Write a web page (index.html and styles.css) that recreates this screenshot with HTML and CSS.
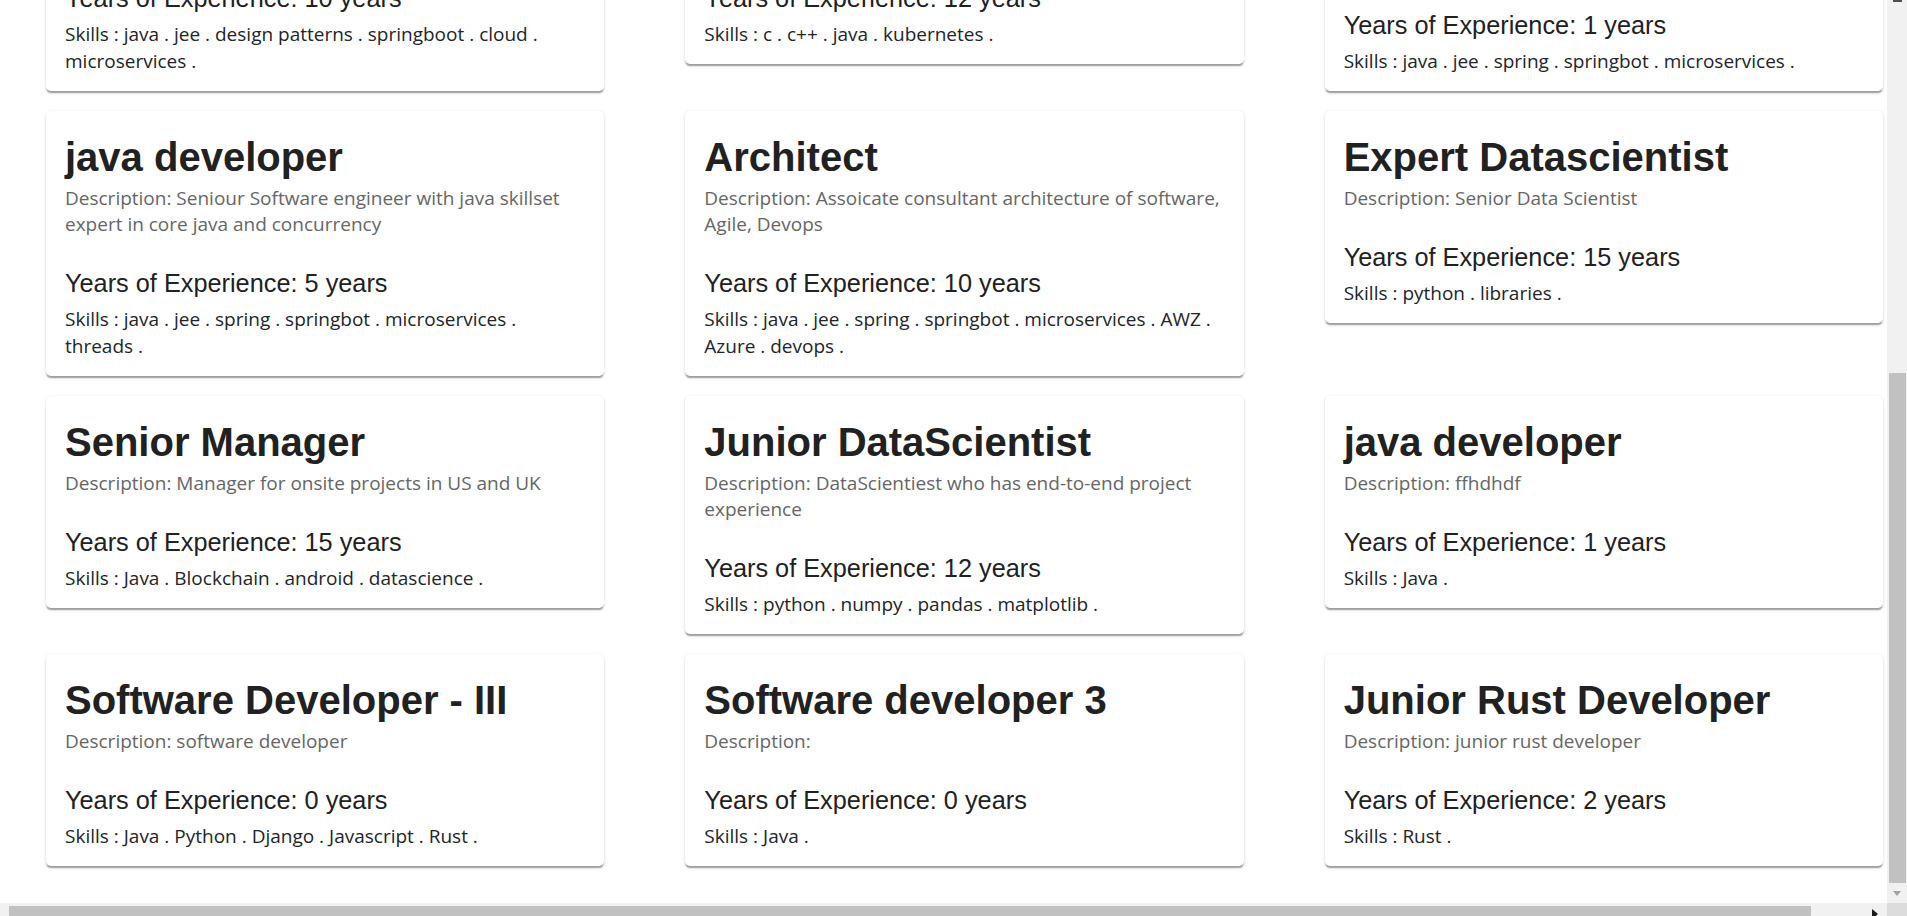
FILE: index.html
```html
<!DOCTYPE html>
<html lang="en">
<head>
<meta charset="utf-8">
<title>Jobs</title>
<link rel="stylesheet" href="styles.css">
</head>
<body>
<div class="window">
  <div class="main">
    <div class="viewport">
      <div class="scroller">
        <div class="grid">
          <div class="card">
            <h2 class="title">java developer</h2>
            <p class="desc">Description: java developer</p>
            <h3 class="years">Years of Experience: 10 years</h3>
            <p class="skills">Skills : <span class="skill">java .</span> <span class="skill">jee .</span> <span class="skill">design patterns .</span> <span class="skill">springboot .</span> <span class="skill">cloud .</span> <span class="skill">microservices .</span></p>
          </div>
          <div class="card">
            <h2 class="title">Software Developer</h2>
            <p class="desc">Description: software developer</p>
            <h3 class="years">Years of Experience: 12 years</h3>
            <p class="skills">Skills : <span class="skill">c .</span> <span class="skill">c++ .</span> <span class="skill">java .</span> <span class="skill">kubernetes .</span></p>
          </div>
          <div class="card">
            <h2 class="title">java developer</h2>
            <p class="desc">Description: java developer with experience in spring, springboot and microservices based applications</p>
            <h3 class="years">Years of Experience: 1 years</h3>
            <p class="skills">Skills : <span class="skill">java .</span> <span class="skill">jee .</span> <span class="skill">spring .</span> <span class="skill">springbot .</span> <span class="skill">microservices .</span></p>
          </div>

          <div class="card">
            <h2 class="title">java developer</h2>
            <p class="desc">Description: Seniour Software engineer with java skillset expert in core java and concurrency</p>
            <h3 class="years">Years of Experience: 5 years</h3>
            <p class="skills">Skills : <span class="skill">java .</span> <span class="skill">jee .</span> <span class="skill">spring .</span> <span class="skill">springbot .</span> <span class="skill">microservices .</span> <span class="skill">threads .</span></p>
          </div>
          <div class="card">
            <h2 class="title">Architect</h2>
            <p class="desc">Description: Assoicate consultant architecture of software, Agile, Devops</p>
            <h3 class="years">Years of Experience: 10 years</h3>
            <p class="skills">Skills : <span class="skill">java .</span> <span class="skill">jee .</span> <span class="skill">spring .</span> <span class="skill">springbot .</span> <span class="skill">microservices .</span> <span class="skill">AWZ .</span> <span class="skill">Azure .</span> <span class="skill">devops .</span></p>
          </div>
          <div class="card">
            <h2 class="title">Expert Datascientist</h2>
            <p class="desc">Description: Senior Data Scientist</p>
            <h3 class="years">Years of Experience: 15 years</h3>
            <p class="skills">Skills : <span class="skill">python .</span> <span class="skill">libraries .</span></p>
          </div>

          <div class="card">
            <h2 class="title">Senior Manager</h2>
            <p class="desc">Description: Manager for onsite projects in US and UK</p>
            <h3 class="years">Years of Experience: 15 years</h3>
            <p class="skills">Skills : <span class="skill">Java .</span> <span class="skill">Blockchain .</span> <span class="skill">android .</span> <span class="skill">datascience .</span></p>
          </div>
          <div class="card">
            <h2 class="title">Junior DataScientist</h2>
            <p class="desc">Description: DataScientiest who has end-to-end project experience</p>
            <h3 class="years">Years of Experience: 12 years</h3>
            <p class="skills">Skills : <span class="skill">python .</span> <span class="skill">numpy .</span> <span class="skill">pandas .</span> <span class="skill">matplotlib .</span></p>
          </div>
          <div class="card">
            <h2 class="title">java developer</h2>
            <p class="desc">Description: ffhdhdf</p>
            <h3 class="years">Years of Experience: 1 years</h3>
            <p class="skills">Skills : <span class="skill">Java .</span></p>
          </div>

          <div class="card">
            <h2 class="title">Software Developer - III</h2>
            <p class="desc">Description: software developer</p>
            <h3 class="years">Years of Experience: 0 years</h3>
            <p class="skills">Skills : <span class="skill">Java .</span> <span class="skill">Python .</span> <span class="skill">Django .</span> <span class="skill">Javascript .</span> <span class="skill">Rust .</span></p>
          </div>
          <div class="card">
            <h2 class="title">Software developer 3</h2>
            <p class="desc">Description: </p>
            <h3 class="years">Years of Experience: 0 years</h3>
            <p class="skills">Skills : <span class="skill">Java .</span></p>
          </div>
          <div class="card">
            <h2 class="title">Junior Rust Developer</h2>
            <p class="desc">Description: junior rust developer</p>
            <h3 class="years">Years of Experience: 2 years</h3>
            <p class="skills">Skills : <span class="skill">Rust .</span></p>
          </div>
        </div>
      </div>
    </div>
    <div class="vscroll">
      <div class="vs-up"><span class="arrow-up-cut"></span></div>
      <div class="vs-track"><div class="vs-thumb"></div></div>
      <div class="vs-down"><span class="arrow-down"></span></div>
    </div>
  </div>
  <div class="hbar">
    <div class="hscroll">
      <div class="hs-left"></div>
      <div class="hs-thumb"></div>
      <div class="hs-right"><span class="arrow-right"></span></div>
    </div>
    <div class="corner"></div>
  </div>
</div>
</body>
</html>
```
FILE: styles.css
```css
html, body {
  margin: 0;
  padding: 0;
  background: #ffffff;
  overflow: hidden;
}

.window {
  width: 1907px;
  height: 916px;
  display: flex;
  flex-direction: column;
  overflow: hidden;
}

.main {
  display: flex;
  height: 903px;
  flex: none;
}

.viewport {
  flex: 1;
  overflow: hidden;
  background: #ffffff;
}

.scroller {
  margin-top: -147.5px;
  padding: 0 4px 0 46px;
}

.grid {
  width: 1837px;
  display: grid;
  grid-template-columns: repeat(3, 1fr);
  column-gap: 81px;
  row-gap: 20px;
  align-items: start;
}

.card {
  background: #ffffff;
  border-radius: 5px;
  box-shadow: 0 2.5px 1.25px -1.25px rgba(0, 0, 0, 0.2),
              0 1.25px 1.25px 0 rgba(0, 0, 0, 0.14),
              0 1.25px 3.75px 0 rgba(0, 0, 0, 0.12);
  padding: 20px 19px 16.5px 19px;
}

.title {
  margin: 0;
  font-family: "Liberation Sans", Arial, sans-serif;
  font-weight: 700;
  font-size: 40px;
  line-height: 52px;
  color: #212121;
}

.desc {
  margin: 2px 0 0 0;
  font-family: "Open Sans", "Noto Sans", sans-serif;
  font-size: 19px;
  line-height: 26.5px;
  color: #666666;
  min-height: 26.5px;
}

.years {
  margin: 30.4px 0 0 0;
  font-family: "Liberation Sans", Arial, sans-serif;
  font-weight: 400;
  font-size: 25.3px;
  line-height: 30px;
  color: #212121;
}

.skills {
  margin: 8px 0 0 0;
  font-family: "Open Sans", "Noto Sans", sans-serif;
  font-size: 19px;
  line-height: 26.5px;
  color: #212529;
}

.skill {
  white-space: nowrap;
}

/* vertical scrollbar */
.vscroll {
  width: 20px;
  flex: none;
  background: #f1f1f1;
  display: flex;
  flex-direction: column;
}

.vs-up {
  height: 4px;
  flex: none;
  display: flex;
  justify-content: center;
}

.arrow-up-cut {
  width: 9px;
  height: 2px;
  background: #505050;
}

.vs-track {
  flex: 1;
  display: flex;
  flex-direction: column;
  justify-content: flex-end;
  padding: 0 1px 0 2px;
}

.vs-thumb {
  height: 510px;
  background: #c1c1c1;
}

.vs-down {
  height: 20px;
  flex: none;
  display: flex;
  align-items: center;
  justify-content: center;
}

.arrow-down {
  width: 0;
  height: 0;
  border-left: 4.5px solid transparent;
  border-right: 4.5px solid transparent;
  border-top: 5px solid #a3a3a3;
}

/* horizontal scrollbar */
.hbar {
  display: flex;
  height: 13px;
  flex: none;
}

.hscroll {
  flex: 1;
  background: #f1f1f1;
  display: flex;
  padding-top: 3px;
}

.hs-left {
  width: 9px;
  flex: none;
}

.hs-thumb {
  width: 1802px;
  flex: none;
  background: #c1c1c1;
}

.hs-right {
  flex: 1;
  display: flex;
  justify-content: flex-end;
  padding-right: 9px;
  padding-top: 3px;
}

.arrow-right {
  width: 0;
  height: 0;
  border-top: 5px solid transparent;
  border-bottom: 5px solid transparent;
  border-left: 6px solid #1a1a1a;
}

.corner {
  width: 20px;
  flex: none;
  background: #dcdcdc;
}
```
